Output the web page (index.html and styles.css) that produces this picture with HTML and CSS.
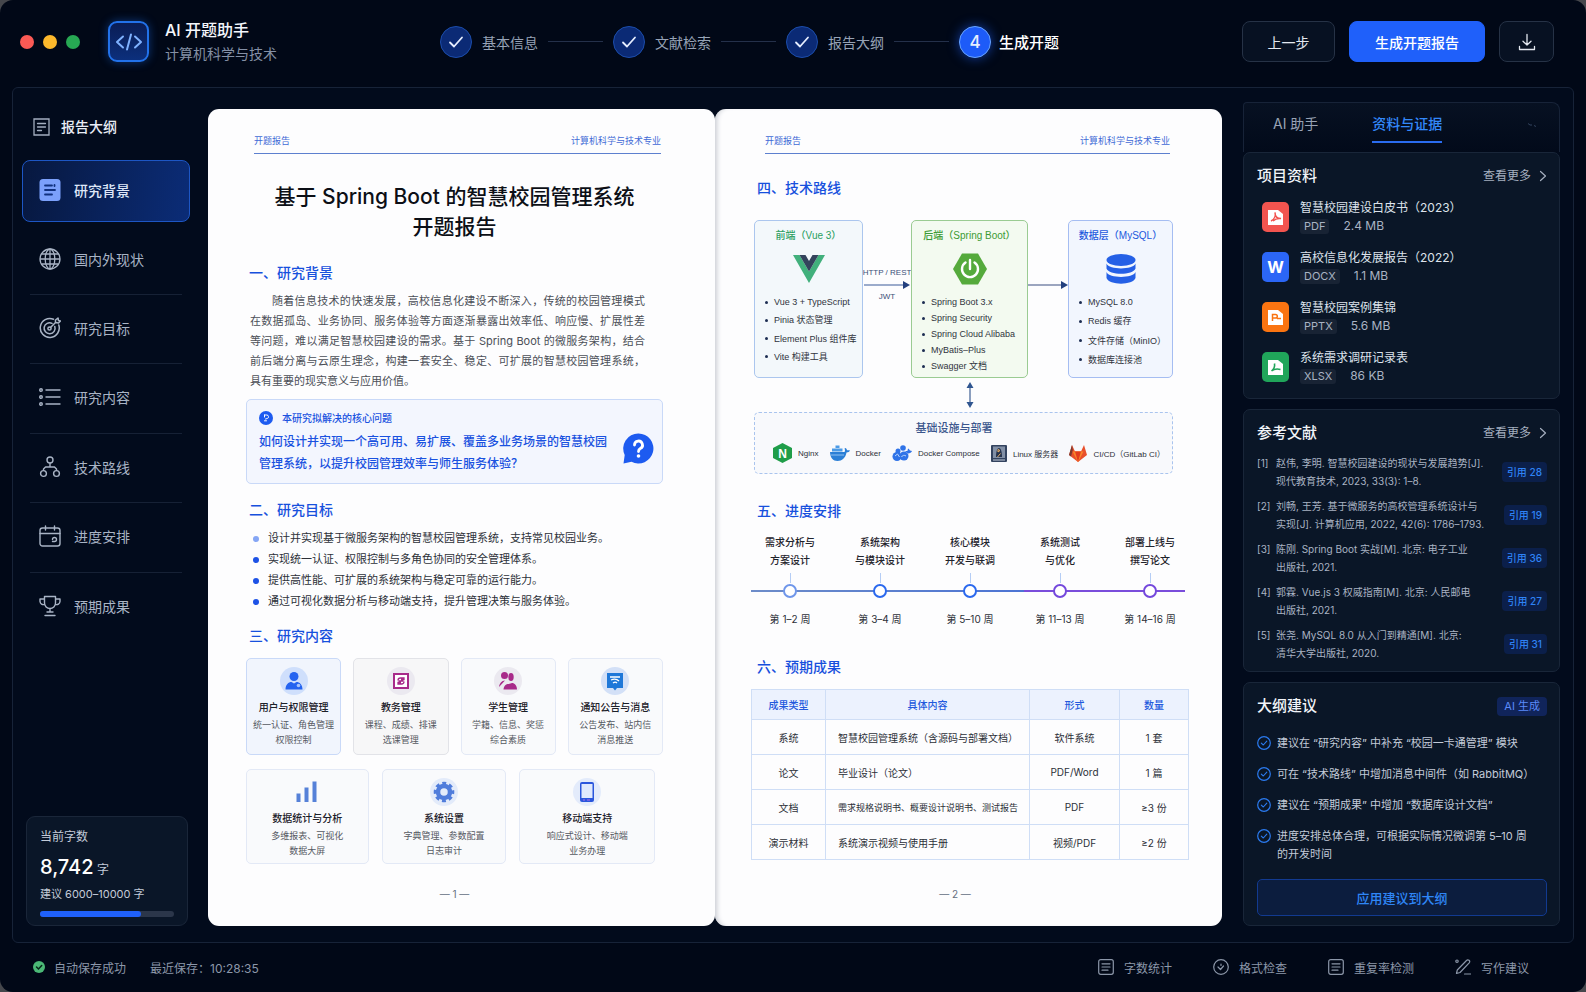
FILE: index.html
```html
<!DOCTYPE html>
<html lang="zh-CN">
<head>
  <meta charset="UTF-8" />
  <meta name="viewport" content="width=device-width, initial-scale=1.0"/>
  <title>AI 开题助手</title>
  <link rel="stylesheet" href="styles.css">
</head>
<body>

<!-- 公用图标 -->
<svg class="sprite" aria-hidden="true">
  <symbol id="i-check" viewBox="0 0 18 18"><path d="M3 9.5l4 4 8-9" fill="none" stroke="currentColor" stroke-width="1.8" stroke-linecap="round" stroke-linejoin="round"/></symbol>
  <symbol id="i-more" viewBox="0 0 8 12"><path d="M1.500 1.500l5 4.500-5 4.500" fill="none" stroke="currentColor" stroke-width="1.200" stroke-linecap="round" stroke-linejoin="round"/></symbol>
  <symbol id="i-tip" viewBox="0 0 14 14"><g fill="none" stroke="currentColor" stroke-linecap="round" stroke-linejoin="round"><circle cx="7" cy="7" r="6.300" stroke-width="1.200"/><path d="M4.300 7.200l2 1.800 3.500-3.800" stroke-width="1.100"/></g></symbol>
  <symbol id="i-doc" viewBox="0 0 16 16"><g fill="none" stroke="currentColor" stroke-width="1.200" stroke-linecap="round"><rect x="0.700" y="0.700" width="14.600" height="14.600" rx="2"/><path d="M4 4.800h8M4 8h8M4 11.200h6"/></g></symbol>
</svg>

<div class="window">
  <header class="topbar">
    <div class="lights">
      <span class="light red"></span>
      <span class="light yellow"></span>
      <span class="light green"></span>
    </div>
    <div class="brand">
      <span class="logo">
        <svg width="28" height="20" viewBox="0 0 28 20" fill="none" stroke="#7fb2ff" stroke-width="2" stroke-linecap="round" stroke-linejoin="round"><path d="M8 4.500L2 10l6 5.500M20 4.500l6 5.500-6 5.500M16 2.500l-4 15"/></svg>
      </span>
      <div>
        <h1>AI 开题助手</h1>
        <p>计算机科学与技术</p>
      </div>
    </div>
    <ol class="steps">
      <li><span class="dot"><svg width="18" height="18"><use href="#i-check"/></svg></span>基本信息</li>
      <li><span class="dot"><svg width="18" height="18"><use href="#i-check"/></svg></span>文献检索</li>
      <li><span class="dot"><svg width="18" height="18"><use href="#i-check"/></svg></span>报告大纲</li>
      <li class="current"><span class="dot">4</span>生成开题</li>
    </ol>
    <div class="actions">
      <button type="button" class="btn btn-prev">上一步</button>
      <button type="button" class="btn btn-primary">生成开题报告</button>
      <button type="button" class="btn btn-icon" aria-label="下载">
        <svg width="18" height="18" viewBox="0 0 18 18" fill="none" stroke="currentColor" stroke-width="1.300" stroke-linecap="round" stroke-linejoin="round"><path d="M9 1.500v10.500M5 8.300L9 12l4-3.700M1.500 13.500v3h15v-3"/></svg>
      </button>
    </div>
  </header>

  <main class="frame">
    <!-- 左侧大纲 -->
    <aside class="sidebar">
      <h2>
        <svg width="17" height="18" viewBox="0 0 17 18" fill="none" stroke="currentColor" stroke-width="1.300" stroke-linecap="round"><path d="M1 1h15v16H1zM4.500 5.500h8M4.500 9h8M4.500 12.500h4"/></svg>
        报告大纲
      </h2>
      <nav>
        <a href="#bg" class="active">
          <svg width="22" height="22" viewBox="0 0 22 22"><rect x="0.500" y="0" width="21" height="22" rx="3.500" fill="#7ba0fb"/><path d="M6 6.500h7M6 11h10M6 15.500h7M15.500 6v1" stroke="#10307e" stroke-width="1.800" stroke-linecap="round"/></svg>
          研究背景</a>
        <a href="#status">
          <svg width="22" height="22" viewBox="0 0 22 22" fill="none" stroke="currentColor" stroke-width="1.300"><circle cx="11" cy="11" r="10"/><ellipse cx="11" cy="11" rx="4.800" ry="10"/><path d="M1 11h20M2.500 6h17M2.500 16h17M11 1v20"/></svg>
          国内外现状</a>
        <a href="#goal">
          <svg width="22" height="22" viewBox="0 0 22 22" fill="none" stroke="currentColor" stroke-width="1.500" stroke-linecap="round" stroke-linejoin="round"><path d="M14.500 2.200A9.500 9.500 0 1 0 19.800 8"/><path d="M13 6.300A5.500 5.500 0 1 0 15.800 9.500"/><circle cx="10.500" cy="11.500" r="1.600"/><path d="M11.500 10.500l5-5M16.500 5.500V3l2.500-2 .5 2.500 2 .5-2 2z"/></svg>
          研究目标</a>
        <a href="#content">
          <svg width="22" height="22" viewBox="0 0 22 22" fill="none" stroke="currentColor" stroke-width="1.400" stroke-linecap="round"><path d="M7 4h14M7 11h14M7 18h14"/><circle cx="2" cy="4" r="1.300"/><circle cx="2" cy="11" r="1.300"/><circle cx="2" cy="18" r="1.300"/></svg>
          研究内容</a>
        <a href="#route">
          <svg width="22" height="22" viewBox="0 0 22 22" fill="none" stroke="currentColor" stroke-width="1.400" stroke-linejoin="round"><circle cx="11" cy="4" r="3"/><circle cx="4.500" cy="17.500" r="2.900"/><circle cx="17.500" cy="17.500" r="2.900"/><path d="M11 7v4M4.500 14.600V13l2-2h9l2 2v1.600"/></svg>
          技术路线</a>
        <a href="#plan">
          <svg width="22" height="22" viewBox="0 0 22 22" fill="none" stroke="currentColor" stroke-width="1.400" stroke-linecap="round"><rect x="1" y="3" width="20" height="18" rx="2.500"/><path d="M1 8.500h20M6.500 1v4M15.500 1v4M13.500 14.500a2 2 0 1 1 2 2h-2"/></svg>
          进度安排</a>
        <a href="#result">
          <svg width="22" height="22" viewBox="0 0 22 22" fill="none" stroke="currentColor" stroke-width="1.400" stroke-linecap="round" stroke-linejoin="round"><path d="M5.500 1.500h11v6.500a5.500 5.500 0 0 1-11 0zM5.500 4H1v2.500A3.500 3.500 0 0 0 5.500 9.500M16.500 4H21v2.500a3.500 3.500 0 0 1-4.500 3M11 13.500V17M8 17h6M6 20.500h10"/></svg>
          预期成果</a>
      </nav>
      <section class="words">
        <p>当前字数</p>
        <p class="count"><strong>8,742</strong> 字</p>
        <p class="range">建议 6000–10000 字</p>
        <div class="bar"><span style="width: 75%"></span></div>
      </section>
    </aside>

    <!-- 报告正文 -->
    <div class="book">
      <article class="page page-left">
        <div class="page-head"><span>开题报告</span><span>计算机科学与技术专业</span></div>
        <h2 class="title">基于 Spring Boot 的智慧校园管理系统<br>开题报告</h2>

        <h3 id="bg">一、研究背景</h3>
        <p class="para">随着信息技术的快速发展，高校信息化建设不断深入，传统的校园管理模式在数据孤岛、业务协同、服务体验等方面逐渐暴露出效率低、响应慢、扩展性差等问题，难以满足智慧校园建设的需求。基于 Spring Boot 的微服务架构，结合前后端分离与云原生理念，构建一套安全、稳定、可扩展的智慧校园管理系统，具有重要的现实意义与应用价值。</p>
        <div class="question">
          <div>
            <h4>
              <svg width="14" height="14" viewBox="0 0 14 14"><circle cx="7" cy="7" r="7" fill="#1d5bf0"/><path d="M5.500 4h2.300a1.800 1.800 0 0 1 .5 3.500L6.500 8M5.500 4v2M5.500 9.800h2" stroke="#fff" fill="none" stroke-linecap="round"/></svg>
              本研究拟解决的核心问题
            </h4>
            <p>如何设计并实现一个高可用、易扩展、覆盖多业务场景的智慧校园<br>管理系统，以提升校园管理效率与师生服务体验？</p>
          </div>
          <svg class="bubble" width="31" height="31" viewBox="0 0 31 31"><path d="M15.500 0.500a15 15 0 1 1-7 28.300L0.500 30.500l1.200-8.500A15 15 0 0 1 15.500 0.500z" fill="#1d5bf0"/><path d="M11.500 12a4 4 0 1 1 5.800 3.600c-1.300.7-1.800 1.400-1.800 2.900" fill="none" stroke="#fff" stroke-width="2.800" stroke-linecap="round"/><circle cx="15.500" cy="23" r="1.800" fill="#fff"/></svg>
        </div>

        <h3 id="goal">二、研究目标</h3>
        <ul class="goals">
          <li>设计并实现基于微服务架构的智慧校园管理系统，支持常见校园业务。</li>
          <li>实现统一认证、权限控制与多角色协同的安全管理体系。</li>
          <li>提供高性能、可扩展的系统架构与稳定可靠的运行能力。</li>
          <li>通过可视化数据分析与移动端支持，提升管理决策与服务体验。</li>
        </ul>

        <h3 id="content">三、研究内容</h3>
        <div class="modules">
          <div class="module blue">
            <svg width="28" height="28" viewBox="0 0 28 28"><circle cx="14" cy="14" r="14" fill="#cfdffc"/><circle cx="14" cy="9.500" r="4.500" fill="#2463f0"/><path d="M5.500 22.500c0-5 3-7.500 6-7.500l2.500 1.500 2.500-1.500c3 0 6 2.500 6 7.500z" fill="#2463f0"/><circle cx="18.500" cy="18.500" r="1.800" fill="#a9c4fb"/></svg>
            <h4>用户与权限管理</h4>
            <p>统一认证、角色管理<br>权限控制</p>
          </div>
          <div class="module gray">
            <svg width="28" height="28" viewBox="0 0 28 28"><circle cx="14" cy="14" r="14" fill="#ebe9f0"/><rect x="7" y="7" width="14" height="14" fill="#fff" stroke="#a82a8a" stroke-width="2"/><path d="M11 13.500c0-1.500 1-2.500 2.500-2.500H17v1.500h-3M17 14.500c0 1.500-1 2.500-2.500 2.500H11v-1.500h3M11.500 14h5" fill="none" stroke="#a82a8a" stroke-width="1.300"/></svg>
            <h4>教务管理</h4>
            <p>课程、成绩、排课<br>选课管理</p>
          </div>
          <div class="module">
            <svg width="28" height="28" viewBox="0 0 28 28"><circle cx="14" cy="14" r="14" fill="#ebe9f0"/><circle cx="10.500" cy="8.500" r="3.500" fill="#a82a8a"/><ellipse cx="17" cy="10" rx="2.700" ry="4" fill="#a82a8a"/><path d="M5 20c.5-3.500 2.500-6.500 6-6.500M9.500 22.500c.5-4 2.500-5.500 5-5.500 1.500 0 2.500-1 3.500-1 2.500 0 5 2.500 5 6.500z" fill="#a82a8a"/></svg>
            <h4>学生管理</h4>
            <p>学籍、信息、奖惩<br>综合素质</p>
          </div>
          <div class="module">
            <svg width="28" height="28" viewBox="0 0 28 28"><circle cx="14" cy="14" r="14" fill="#d3e0f7"/><path d="M6 6h16v15h-6l-2 2.500-2-2.500H6z" fill="#1f78d8"/><path d="M9 10h10M10 13c3-1.500 6-1 8 1M12 16c1.500-1 3-1 4 0" stroke="#fff" stroke-width="1.300" fill="none"/></svg>
            <h4>通知公告与消息</h4>
            <p>公告发布、站内信<br>消息推送</p>
          </div>
        </div>
        <div class="modules modules-3">
          <div class="module">
            <svg width="28" height="28" viewBox="0 0 28 28"><path d="M3.500 15.500h4V24h-4zM11.500 9.500h4V24h-4zM19.500 3.500h4V24h-4z" fill="#5681d8"/></svg>
            <h4>数据统计与分析</h4>
            <p>多维报表、可视化<br>数据大屏</p>
          </div>
          <div class="module">
            <svg width="28" height="28" viewBox="0 0 28 28"><circle cx="14" cy="14" r="14" fill="#e3ebfa"/><circle cx="14" cy="14" r="6" fill="none" stroke="#4f7cdb" stroke-width="4.500"/><circle cx="14" cy="14" r="8.800" fill="none" stroke="#4f7cdb" stroke-width="3" stroke-dasharray="3.910 3" stroke-dashoffset="2"/></svg>
            <h4>系统设置</h4>
            <p>字典管理、参数配置<br>日志审计</p>
          </div>
          <div class="module">
            <svg width="28" height="28" viewBox="0 0 28 28"><circle cx="14" cy="14" r="14" fill="#e3ebfb"/><rect x="7" y="4" width="14" height="20" rx="2" fill="#2a56dc"/><rect x="8.500" y="6" width="11" height="14" fill="#dfe9fd"/><path d="M10 22h2M14 22h3" stroke="#b26bea"/></svg>
            <h4>移动端支持</h4>
            <p>响应式设计、移动端<br>业务办理</p>
          </div>
        </div>
        <p class="page-no">— 1 —</p>
      </article>

      <article class="page page-right">
        <div class="page-head"><span>开题报告</span><span>计算机科学与技术专业</span></div>

        <h3 id="route">四、技术路线</h3>
        <div class="stack">
          <div class="tier front">
            <h4>前端（Vue 3）</h4>
            <svg width="34" height="32" viewBox="0 0 34 32"><path d="M1 2h6.500L17 18.500 26.500 2H33L17 30z" fill="#41b07c"/><path d="M7.500 2h6L17 8l3.500-6h6L17 18.500z" fill="#33435c"/></svg>
            <ul>
              <li>Vue 3 + TypeScript</li>
              <li>Pinia 状态管理</li>
              <li>Element Plus 组件库</li>
              <li>Vite 构建工具</li>
            </ul>
          </div>
          <div class="link">
            <span>HTTP / REST</span>
            <svg width="46" height="10" viewBox="0 0 46 10"><path d="M0 5h40" stroke="#3a5a98" stroke-width="1.200"/><path d="M39 1l7 4-7 4z" fill="#23407e"/></svg>
            <span>JWT</span>
          </div>
          <div class="tier back">
            <h4>后端（Spring Boot）</h4>
            <svg width="34" height="32" viewBox="0 0 34 32"><path d="M9 .5h16L34 16l-9 15.500H9L0 16z" fill="#55aa3c"/><path d="M12.500 9.500a8 8 0 1 0 9 0M17 7v9" fill="none" stroke="#fff" stroke-width="2.400" stroke-linecap="round"/></svg>
            <ul>
              <li>Spring Boot 3.x</li>
              <li>Spring Security</li>
              <li>Spring Cloud Alibaba</li>
              <li>MyBatis–Plus</li>
              <li>Swagger 文档</li>
            </ul>
          </div>
          <div class="link">
            <svg width="40" height="10" viewBox="0 0 40 10"><path d="M0 5h34" stroke="#3a4f80" stroke-width="1.200"/><path d="M33 1l7 4-7 4z" fill="#23407e"/></svg>
          </div>
          <div class="tier data">
            <h4>数据层（MySQL）</h4>
            <svg width="30" height="32" viewBox="0 0 30 32" fill="#2560e6"><ellipse cx="15" cy="7" rx="14.500" ry="6"/><path d="M.5 10.500C3 17 27 17 29.500 10.500v5C27 22.500 3 22.500.5 15.500z"/><path d="M.5 19C3 25.500 27 25.500 29.500 19v6C27 32.500 3 32.500.5 25z"/></svg>
            <ul>
              <li>MySQL 8.0</li>
              <li>Redis 缓存</li>
              <li>文件存储（MinIO）</li>
              <li>数据库连接池</li>
            </ul>
          </div>
          <svg class="updown" width="8" height="26" viewBox="0 0 8 26"><path d="M4 5v16" stroke="#3f5f93" stroke-width="1.200"/><path d="M4 0l3.500 6h-7zM4 26l3.500-6h-7z" fill="#2f5590"/></svg>
        </div>
        <div class="infra">
          <h4>基础设施与部署</h4>
          <ul>
            <li>
              <svg width="19" height="20" viewBox="0 0 19 20"><path d="M9.500 0L19 5v10l-9.500 5L0 15V5z" fill="#1f9d49"/><text x="9.500" y="14.500" text-anchor="middle" font-size="12" font-weight="700" fill="#fff">N</text></svg>
              Nginx</li>
            <li>
              <svg width="20" height="16" viewBox="0 0 20 16" fill="#2b7fd6"><path d="M0 7h14.500c.8-1 .5-2.500 0-3.500l1-.5c1 .6 1.400 1.500 1.500 2.300 1-.3 2-.2 3 .2-.5 1.300-1.800 2-3.500 2C15.500 13 12 16 7.500 16 3 16 .3 13 0 7z"/><path d="M2 3.500h10.500v3H2zM5.500 .5h4v2.500h-4z" fill="#4c9be6"/><path d="M1 10h13" stroke="#8fc2f2" fill="none"/></svg>
              Docker</li>
            <li>
              <svg width="20" height="16" viewBox="0 0 20 16" fill="#2f73e8"><circle cx="5" cy="11.500" r="4.500"/><circle cx="12" cy="11" r="4.500"/><circle cx="11" cy="3" r="2.800"/><circle cx="6" cy="6" r="2.500"/><path d="M13 6h2.500c0-1 .3-2 1-2.500l1.500 2 2 .5c-.5 1.500-2 2.500-4 2.500z"/><path d="M3 11l2.500-2 2 3M9.500 12c1-2 3-2 4.500-1" fill="none" stroke="#b9d4fb"/></svg>
              Docker Compose</li>
            <li>
              <svg width="16" height="17" viewBox="0 0 16 17"><rect width="16" height="17" rx="1" fill="#33435f"/><rect x="2" y="1.500" width="12" height="11.500" fill="#8290a6"/><path d="M5 12c0-5 1-9 3-9s3 4 3 9z" fill="#27344d"/><path d="M7 4.500l2 1-2 1.500zM6.500 12l3-3.500" stroke="#e8b06a" fill="none"/><path d="M2 15h12" stroke="#c3ccd9"/></svg>
              Linux 服务器</li>
            <li>
              <svg width="18" height="17" viewBox="0 0 18 17"><path d="M9 17L0 10 3 0l3 6.500h6L15 0l3 10z" fill="#e8502c"/><path d="M9 17L3.500 6.500h11z" fill="#f9862b"/><path d="M9 17L6 6.500h6z" fill="#e23c1f"/><path d="M3 0L0 10l2 1.500L3.800 5z" fill="#7a3a30"/></svg>
              CI/CD（GitLab CI）</li>
          </ul>
        </div>

        <h3 id="plan">五、进度安排</h3>
        <ol class="timeline">
          <li class="soft"><p>需求分析与<br>方案设计</p><i></i><time>第 1–2 周</time></li>
          <li><p>系统架构<br>与模块设计</p><i></i><time>第 3–4 周</time></li>
          <li><p>核心模块<br>开发与联调</p><i></i><time>第 5–10 周</time></li>
          <li class="late"><p>系统测试<br>与优化</p><i></i><time>第 11–13 周</time></li>
          <li class="late"><p>部署上线与<br>撰写论文</p><i></i><time>第 14–16 周</time></li>
        </ol>

        <h3 id="result">六、预期成果</h3>
        <table>
          <colgroup><col class="c-type"><col><col class="c-form"><col class="c-num"></colgroup>
          <thead>
            <tr><th>成果类型</th><th>具体内容</th><th>形式</th><th>数量</th></tr>
          </thead>
          <tbody>
            <tr><td>系统</td><td>智慧校园管理系统（含源码与部署文档）</td><td>软件系统</td><td>1 套</td></tr>
            <tr><td>论文</td><td>毕业设计（论文）</td><td>PDF/Word</td><td>1 篇</td></tr>
            <tr><td>文档</td><td class="compact">需求规格说明书、概要设计说明书、测试报告</td><td>PDF</td><td>≥3 份</td></tr>
            <tr><td>演示材料</td><td>系统演示视频与使用手册</td><td>视频/PDF</td><td>≥2 份</td></tr>
          </tbody>
        </table>
        <p class="page-no">— 2 —</p>
      </article>
    </div>

    <!-- 右侧资料 -->
    <aside class="panel">
      <div class="tabs">
        <button type="button">AI 助手</button>
        <button type="button" class="on">资料与证据</button>
        <svg width="10" height="4" viewBox="0 0 10 4"><path d="M1 .5l2 1.500h2M7 2.500l2 1" fill="none" stroke="#33435e"/></svg>
      </div>
      <section class="card">
        <div class="card-head"><h2>项目资料</h2><a href="#files">查看更多<svg width="8" height="12"><use href="#i-more"/></svg></a></div>
        <ul class="files">
          <li>
            <svg width="27" height="30" viewBox="0 0 27 30"><rect width="27" height="30" rx="5" fill="#f2544f"/><path d="M6 8h10l5 4v11H6z" fill="#fff"/><path d="M9 19c3-1.500 5-5 4-8.500 0 3.500 2 6 6 6-3.500-.5-6 .5-8 2.500" fill="none" stroke="#f2544f" stroke-width="1.500"/></svg>
            <div><h3>智慧校园建设白皮书（2023）</h3><p><span>PDF</span>2.4 MB</p></div>
          </li>
          <li>
            <svg width="27" height="30" viewBox="0 0 27 30"><rect width="27" height="30" rx="5" fill="#2b66f6"/><text x="13.500" y="21" text-anchor="middle" font-size="16" font-weight="700" fill="#fff">W</text></svg>
            <div><h3>高校信息化发展报告（2022）</h3><p><span>DOCX</span>1.1 MB</p></div>
          </li>
          <li>
            <svg width="27" height="30" viewBox="0 0 27 30"><rect width="27" height="30" rx="5" fill="#fa7411"/><path d="M6 8h10l5 4v11H6z" fill="#fff"/><path d="M10.500 19v-6.500h3a1.800 1.800 0 0 1 0 3.600h-3M15 16.500h4" fill="none" stroke="#fa7411" stroke-width="1.500"/></svg>
            <div><h3>智慧校园案例集锦</h3><p><span>PPTX</span>5.6 MB</p></div>
          </li>
          <li>
            <svg width="27" height="30" viewBox="0 0 27 30"><rect width="27" height="30" rx="5" fill="#20a55a"/><path d="M6 8h10l5 4v11H6z" fill="#fff"/><path d="M12.500 11.500c.5 3-.5 5.500-3 7.500 2.500-2 5.500-2.500 9-1.500" fill="none" stroke="#20a55a" stroke-width="1.600"/></svg>
            <div><h3>系统需求调研记录表</h3><p><span>XLSX</span>86 KB</p></div>
          </li>
        </ul>
      </section>

      <section class="card">
        <div class="card-head"><h2>参考文献</h2><a href="#refs">查看更多<svg width="8" height="12"><use href="#i-more"/></svg></a></div>
        <ul class="refs">
          <li><span>[1]</span><p>赵伟, 李明. 智慧校园建设的现状与发展趋势[J].<br>现代教育技术, 2023, 33(3): 1–8.</p><b>引用 28</b></li>
          <li><span>[2]</span><p>刘畅, 王芳. 基于微服务的高校管理系统设计与<br>实现[J]. 计算机应用, 2022, 42(6): 1786–1793.</p><b>引用 19</b></li>
          <li><span>[3]</span><p>陈刚. Spring Boot 实战[M]. 北京: 电子工业<br>出版社, 2021.</p><b>引用 36</b></li>
          <li><span>[4]</span><p>郭霖. Vue.js 3 权威指南[M]. 北京: 人民邮电<br>出版社, 2021.</p><b>引用 27</b></li>
          <li><span>[5]</span><p>张尧. MySQL 8.0 从入门到精通[M]. 北京:<br>清华大学出版社, 2020.</p><b>引用 31</b></li>
        </ul>
      </section>

      <section class="card">
        <div class="card-head"><h2>大纲建议</h2><b class="tag">AI 生成</b></div>
        <ul class="tips">
          <li><svg width="14" height="14"><use href="#i-tip"/></svg>建议在 “研究内容” 中补充 “校园一卡通管理” 模块</li>
          <li><svg width="14" height="14"><use href="#i-tip"/></svg>可在 “技术路线” 中增加消息中间件（如 RabbitMQ）</li>
          <li><svg width="14" height="14"><use href="#i-tip"/></svg>建议在 “预期成果” 中增加 “数据库设计文档”</li>
          <li><svg width="14" height="14"><use href="#i-tip"/></svg><span>进度安排总体合理，可根据实际情况微调第 5–10 周<br>的开发时间</span></li>
        </ul>
        <button type="button" class="apply">应用建议到大纲</button>
      </section>
    </aside>
  </main>

  <footer class="statusbar">
    <span class="saved">
      <svg width="12" height="12" viewBox="0 0 12 12"><circle cx="6" cy="6" r="6" fill="#4bb876"/><path d="M3.500 6l2 2L8.700 4.500" fill="none" stroke="#06281a" stroke-width="1.500" stroke-linecap="round"/></svg>
      自动保存成功
    </span>
    <span>最近保存：10:28:35</span>
    <div class="tools">
      <a href="#count"><svg width="16" height="16"><use href="#i-doc"/></svg>字数统计</a>
      <a href="#format"><svg width="16" height="16" viewBox="0 0 16 16" fill="none" stroke="currentColor" stroke-width="1.200" stroke-linecap="round" stroke-linejoin="round"><circle cx="8" cy="8" r="7.300"/><path d="M5 8l2.500 2.500 3-3.500M8 5v1.500"/></svg>格式检查</a>
      <a href="#repeat"><svg width="16" height="16"><use href="#i-doc"/></svg>重复率检测</a>
      <a href="#writing"><svg width="16" height="16" viewBox="0 0 16 16" fill="none" stroke="currentColor" stroke-width="1.200" stroke-linecap="round" stroke-linejoin="round"><path d="M1.500 14.500l.8-3.500L11.500 1.500a1.700 1.700 0 0 1 2.700 2.300L5 13.500zM9.500 15h6"/><circle cx="2" cy="2.200" r="1.200"/></svg>写作建议</a>
    </div>
  </footer>
</div>

</body>
</html>
```
FILE: styles.css
```css
* {
  box-sizing: border-box;
}

body {
  margin: 0;
  background-color: #45474c;
  color: #c3cbd9;
  font-family: Inter, "Noto Sans CJK SC", sans-serif;
  font-size: 12px;
}

h1, h2, h3, h4, p, ul, ol {
  margin: 0;
  padding: 0;
}

ul, ol {
  list-style: none;
}

a {
  color: inherit;
  text-decoration: none;
}

button {
  font-family: inherit;
  cursor: pointer;
}

svg {
  flex-shrink: 0;
}

.sprite {
  display: none;
}

.window {
  display: flex;
  flex-direction: column;
  min-height: 100vh;
  background-color: #010817;
  border-radius: 13px;
  overflow: hidden;
}

/* 顶部栏 */
.topbar {
  display: flex;
  align-items: center;
  height: 87px;
  padding: 0 32px 4px 20px;
}

.lights {
  display: flex;
  gap: 9px;
  margin-right: 28px;
}

.light {
  width: 14px;
  height: 14px;
  border-radius: 50%;
}

.red { background-color: #fb5a55; }
.yellow { background-color: #fcb82c; }
.green { background-color: #27a853; }

.brand {
  display: flex;
  align-items: center;
  gap: 16px;
}

.logo {
  display: flex;
  align-items: center;
  justify-content: center;
  width: 41px;
  height: 41px;
  border: 2px solid #2272ea;
  border-radius: 9px;
  background: linear-gradient(#0a1d55, #0c2f7c);
  box-shadow: 0 0 10px rgba(32, 110, 240, 0.45);
}

.brand h1 {
  color: #f4f7fc;
  font-size: 16px;
  font-weight: 500;
  line-height: 24px;
}

.brand p {
  color: #8490a5;
  font-size: 14px;
  line-height: 24px;
}

.steps {
  display: flex;
  align-items: center;
  margin-left: 163px;
  color: #97a3b6;
  font-size: 14px;
}

.steps li {
  display: flex;
  align-items: center;
  gap: 10px;
  white-space: nowrap;
}

.steps li:not(:last-child)::after {
  content: "";
  width: 55px;
  height: 1px;
  margin-right: 10px;
  background-color: #24304a;
}

.steps .dot {
  display: flex;
  align-items: center;
  justify-content: center;
  width: 32px;
  height: 32px;
  border: 1px solid #1c4dab;
  border-radius: 50%;
  background-color: #0b2a75;
  color: #e6eeff;
}

.steps .current {
  gap: 8px;
  color: #fff;
  font-size: 15px;
  font-weight: 500;
}

.steps .current .dot {
  border-color: #68a4ff;
  background-color: #1d5bf8;
  box-shadow: 0 0 12px rgba(32, 96, 255, 0.6);
  font-size: 17px;
}

.actions {
  display: flex;
  gap: 14px;
  margin-left: auto;
}

.btn {
  height: 41px;
  border: 1px solid #263246;
  border-radius: 8px;
  background-color: #071122;
  color: #e3e8f0;
  font-size: 14px;
}

.btn-prev {
  width: 93px;
}

.btn-primary {
  width: 136px;
  border-color: #1f60fa;
  background-color: #1f60fa;
  color: #fff;
  font-weight: 500;
}

.btn-icon {
  display: flex;
  align-items: center;
  justify-content: center;
  width: 55px;
}

/* 主体 */
.frame {
  display: flex;
  flex: 1;
  margin: 0 12px;
  padding: 14px 13px 16px 0;
  border: 1px solid #172338;
  border-radius: 6px;
  background-color: #020b1c;
}

.sidebar {
  display: flex;
  flex-direction: column;
  width: 195px;
  padding: 0 18px 0 9px;
}

.sidebar h2 {
  display: flex;
  align-items: center;
  gap: 11px;
  padding: 12px 0 0 11px;
  color: #e8edf5;
  font-size: 14px;
  font-weight: 500;
  line-height: 26px;
}

.sidebar h2 svg {
  color: #a4afc0;
}

.sidebar nav {
  display: grid;
  grid-auto-rows: 1fr;
  height: 486px;
  margin-top: 16px;
}

.sidebar nav a {
  display: flex;
  align-items: center;
  gap: 13px;
  margin: 0 8px;
  padding: 0 9px 2px;
  border-bottom: 1px solid #162135;
  color: #a9b4c5;
  font-size: 14px;
}

.sidebar nav a:last-child {
  border-bottom: 0;
}

.sidebar nav .active {
  margin: 4px 0 3px;
  padding: 0 16px 2px;
  border: 1px solid #1d56c4;
  border-radius: 8px;
  background: linear-gradient(100deg, #07183f, #0b2c77);
  color: #dfe8f8;
  font-weight: 500;
}

.words {
  margin: auto 2px 0 4px;
  padding: 10px 13px 8px;
  border: 1px solid #1a2639;
  border-radius: 9px;
  background-color: #0a1628;
  line-height: 20px;
}

.words .count {
  margin: 8px 0 2px;
  line-height: 24px;
}

.words .count strong {
  color: #fff;
  font-size: 20px;
  font-weight: 500;
}

.words .range {
  font-size: 11px;
}

.bar {
  height: 6px;
  margin-top: 7px;
  border-radius: 3px;
  background-color: #2b364a;
}

.bar span {
  display: block;
  height: 6px;
  border-radius: 3px;
  background-color: #1f60fa;
}

/* 纸张 */
.book {
  display: grid;
  grid-template-columns: 1fr 1fr;
  flex: 1;
  margin: 7px 21px 0 0;
}

.page {
  border-radius: 11px;
  background-color: #fdfdfe;
  color: #2c3038;
}

.page-left {
  padding: 24px 52px 0 38px;
}

.page-right {
  padding: 24px 33px 0 36px;
  box-shadow: inset 5px 0 5px -3px #c9ccd3;
}

.page-head {
  display: flex;
  justify-content: space-between;
  margin: 0 2px 0 8px;
  padding-bottom: 4px;
  border-bottom: 1px solid #5d80cf;
  color: #416ad6;
  font-size: 9px;
  line-height: 16px;
}

.page-right .page-head {
  margin: 0 19px 0 14px;
}

.title {
  margin: 28px 0 21px;
  color: #0c0f16;
  font-size: 21px;
  font-weight: 500;
  line-height: 30px;
  text-align: center;
}

.page h3 {
  margin: 16px 0 8px 3px;
  color: #1750dd;
  font-size: 14px;
  font-weight: 500;
  line-height: 20px;
}

.page .goals + h3 {
  margin-top: 14px;
}

.para {
  margin: 0 18px 0 4px;
  color: #4b4f57;
  font-size: 11px;
  line-height: 20px;
  text-align: justify;
  text-indent: 2em;
}

.question {
  display: flex;
  align-items: center;
  justify-content: space-between;
  margin-top: 8px;
  padding: 11px 8px 8px 12px;
  border: 1px solid #c9d9f8;
  border-radius: 5px;
  background-color: #f3f6fe;
  color: #1a52e0;
}

.question h4 {
  display: flex;
  align-items: center;
  gap: 9px;
  font-size: 10px;
  font-weight: 500;
  line-height: 14px;
}

.question p {
  margin-top: 6px;
  font-size: 12px;
  font-weight: 500;
  line-height: 22px;
  white-space: nowrap;
}

.question .bubble {
  margin-top: 10px;
}

.goals {
  padding-left: 7px;
  font-size: 11px;
  line-height: 21px;
}

.goals li {
  display: flex;
  align-items: center;
  gap: 9px;
}

.goals li::before {
  content: "";
  width: 6px;
  height: 6px;
  border-radius: 50%;
  background-color: #1d52e6;
}

.goals li:first-child::before {
  background-color: #85a6f5;
}

.modules {
  display: grid;
  grid-template-columns: repeat(4, 1fr);
  gap: 12px;
  margin-top: 12px;
}

.modules-3 {
  grid-template-columns: 122fr 124fr 135fr;
  gap: 13px;
  margin: 14px 8px 0 0;
}

.module {
  padding: 8px 0 7px;
  border: 1px solid #e3e9f6;
  border-radius: 5px;
  background-color: #f9fafc;
  text-align: center;
}

.modules-3 .module {
  padding-bottom: 5px;
}

.module.blue {
  border-color: #c9d9f8;
  background-color: #f1f5fd;
}

.module.gray {
  border-color: #e2e3e8;
  background-color: #f7f7f8;
}

.module svg {
  display: block;
  margin: 0 auto;
}

.module h4 {
  margin-top: 4px;
  color: #1c2029;
  font-size: 10px;
  font-weight: 500;
  line-height: 16px;
}

.module p {
  margin-top: 2px;
  color: #555962;
  font-size: 9px;
  line-height: 15px;
}

.page-no {
  margin-top: 22px;
  color: #646f80;
  font-size: 10px;
  line-height: 16px;
  text-align: center;
}

.page-right .page-no {
  margin-top: 26px;
  padding-right: 30px;
}

/* 技术路线 */
.page-right h3 {
  margin-left: 6px;
}

.page-right .page-head + h3 {
  margin-top: 24px;
}

.stack {
  display: grid;
  grid-template-columns: 109fr 48fr 117fr 40fr 105fr;
  margin: 22px 16px 0 3px;
}

.stack, .infra {
  font-family: "Liberation Sans", "Noto Sans CJK SC", sans-serif;
}

.tier {
  display: flex;
  flex-direction: column;
  align-items: center;
  min-width: 0;
  height: 158px;
  padding-top: 6px;
  border: 1px solid #abc6ee;
  border-radius: 5px;
}

.tier h4 {
  margin-bottom: 8px;
  font-size: 10px;
  font-weight: 500;
  line-height: 18px;
  white-space: nowrap;
}

.tier ul {
  display: flex;
  flex: 1;
  flex-direction: column;
  justify-content: space-between;
  align-self: stretch;
  margin: 9px 0 12px 10px;
  color: #30343d;
  font-size: 9px;
  line-height: 16px;
  white-space: nowrap;
}

.tier li {
  display: flex;
  align-items: center;
  gap: 6px;
}

.tier li::before {
  content: "";
  width: 3px;
  height: 3px;
  border-radius: 50%;
  background-color: #1d2d52;
}

.front {
  background-color: #f3f8fb;
}

.front h4 {
  color: #2c9f62;
}

.back {
  border-color: #9acb92;
  background-color: #f3faf0;
}

.back h4 {
  color: #3c9a34;
}

.back ul {
  margin-bottom: 3px;
}

.data {
  border-color: #a5bdf2;
  background-color: #f2f6fe;
}

.data h4 {
  color: #2259dd;
}

.data ul {
  margin-bottom: 9px;
}

.link {
  display: flex;
  flex-direction: column;
  align-items: center;
  justify-content: center;
  min-width: 0;
  padding-bottom: 28px;
  color: #3b4f78;
  font-size: 8px;
  line-height: 14px;
  white-space: nowrap;
}

.updown {
  grid-column: 3;
  justify-self: center;
  margin: 4px 0;
}

.infra {
  margin: 0 16px 0 3px;
  padding: 6px 7px 9px 18px;
  border: 1px dashed #a9c4ee;
  border-radius: 5px;
  background-color: #f8f9fc;
}

.infra h4 {
  padding-right: 30px;
  color: #3b568c;
  font-size: 11px;
  font-weight: 500;
  line-height: 18px;
  text-align: center;
}

.infra ul {
  display: flex;
  justify-content: space-between;
  margin-top: 5px;
}

.infra li {
  display: flex;
  align-items: center;
  gap: 6px;
  height: 22px;
  color: #2c3038;
  font-size: 8px;
  white-space: nowrap;
}

.page-right .infra + h3 {
  margin-top: 27px;
}

/* 进度时间线 */
.timeline {
  position: relative;
  display: grid;
  grid-template-columns: repeat(5, 1fr);
  margin: 12px -6px 29px;
  text-align: center;
}

.timeline::before {
  content: "";
  position: absolute;
  top: 57px;
  left: 6px;
  right: 10px;
  height: 2px;
  background: linear-gradient(90deg, #6d8cc9, #4c74d4 63%, #7a4ddb 63%);
}

.timeline li {
  display: flex;
  flex-direction: column;
  align-items: center;
}

.timeline p {
  color: #1f232b;
  font-size: 10px;
  font-weight: 500;
  line-height: 18px;
}

.timeline p::after {
  content: "";
  display: block;
  width: 1px;
  height: 10px;
  margin: 4px auto 1px;
  background-color: #b5cdf5;
}

.timeline i {
  position: relative;
  width: 14px;
  height: 14px;
  border: 2px solid #2b69ee;
  border-radius: 50%;
  background-color: #fff;
}

.timeline .soft i {
  border-color: #6f96ea;
}

.timeline .late i {
  border-color: #7448dc;
}

.timeline time {
  margin-top: 12px;
  font-size: 10px;
  line-height: 18px;
}

table {
  width: 100%;
  margin-top: 12px;
  border-collapse: collapse;
  table-layout: fixed;
  font-size: 10px;
  text-align: center;
}

.c-type { width: 74px; }
.c-form { width: 90px; }
.c-num { width: 69px; }

th, td {
  height: 35px;
  padding: 0;
  border: 1px solid #cfdef6;
}

th {
  height: 30px;
  background-color: #ecf2fe;
  color: #2259dd;
  font-weight: 500;
}

td:nth-child(2) {
  padding-left: 12px;
  text-align: left;
  white-space: nowrap;
}

td.compact {
  font-size: 9px;
}

/* 右侧面板 */
.panel {
  display: flex;
  flex-direction: column;
  width: 317px;
}

.tabs {
  display: flex;
  align-items: flex-start;
  gap: 54px;
  height: 50px;
  padding: 8px 22px 0 29px;
  border: 1px solid #172338;
  border-bottom: 0;
  border-radius: 4px 8px 0 0;
  background: linear-gradient(#071122, #020a1a);
}

.tabs button {
  padding: 0 0 5px;
  border: 0;
  border-bottom: 2px solid transparent;
  background: none;
  color: #98a3b5;
  font-size: 14px;
  line-height: 25px;
}

.tabs .on {
  border-bottom-color: #2a6cf0;
  color: #3388fa;
  font-weight: 500;
}

.tabs svg {
  margin: 12px 0 0 auto;
}

.card {
  padding: 11px 12px 9px 13px;
  border: 1px solid #192639;
  border-radius: 7px;
  background-color: #0a1627;
}

.card + .card {
  margin-top: 10px;
}

.card-head {
  display: flex;
  align-items: center;
  justify-content: space-between;
  line-height: 24px;
}

.card-head h2 {
  color: #f1f4f9;
  font-size: 15px;
  font-weight: 500;
}

.card-head a {
  display: flex;
  align-items: center;
  gap: 8px;
  color: #a5afbf;
}

.files {
  display: grid;
  gap: 14px;
  margin: 11px 5px 4px;
}

.files li {
  display: flex;
  align-items: center;
  gap: 11px;
}

.files h3 {
  color: #dde3ec;
  font-size: 12px;
  font-weight: 400;
  line-height: 18px;
}

.files p {
  display: flex;
  align-items: center;
  gap: 14px;
  color: #a9b3c3;
  line-height: 18px;
}

.files span {
  padding: 0 4px;
  border-radius: 3px;
  background-color: #182334;
  font-size: 11px;
  line-height: 15px;
}

.refs {
  display: grid;
  gap: 7px;
  margin-top: 9px;
}

.refs li {
  display: flex;
  align-items: center;
  color: #a9b3c3;
  font-size: 10px;
  line-height: 18px;
}

.refs span {
  align-self: flex-start;
  width: 19px;
}

.refs p {
  white-space: nowrap;
}

.refs b {
  margin-left: auto;
  padding: 1px 5px;
  border-radius: 4px;
  background-color: #0b1f4a;
  color: #2f83f5;
  font-weight: 500;
  white-space: nowrap;
}

.tag {
  padding: 0 7px;
  border-radius: 4px;
  background-color: #10245a;
  color: #5b8bfa;
  font-size: 11px;
  font-weight: 400;
  line-height: 19px;
}

.tips {
  display: grid;
  gap: 13px;
  margin: 16px 0;
  font-size: 11px;
  line-height: 18px;
}

.tips li {
  display: flex;
  gap: 6px;
  white-space: nowrap;
}

.tips svg {
  margin-top: 2px;
  color: #2b7bf0;
}

.apply {
  display: block;
  width: 100%;
  height: 37px;
  border: 1px solid #123a90;
  border-radius: 5px;
  background-color: #0c1d3e;
  color: #2f86f6;
  font-size: 13px;
  font-weight: 500;
}

/* 底部状态栏 */
.statusbar {
  display: flex;
  align-items: center;
  gap: 24px;
  height: 49px;
  padding: 0 57px 1px 33px;
  color: #8c97a9;
}

.saved {
  display: flex;
  align-items: center;
  gap: 9px;
}

.tools {
  display: flex;
  gap: 41px;
  margin-left: auto;
}

.tools a {
  display: flex;
  align-items: center;
  gap: 10px;
}
```
